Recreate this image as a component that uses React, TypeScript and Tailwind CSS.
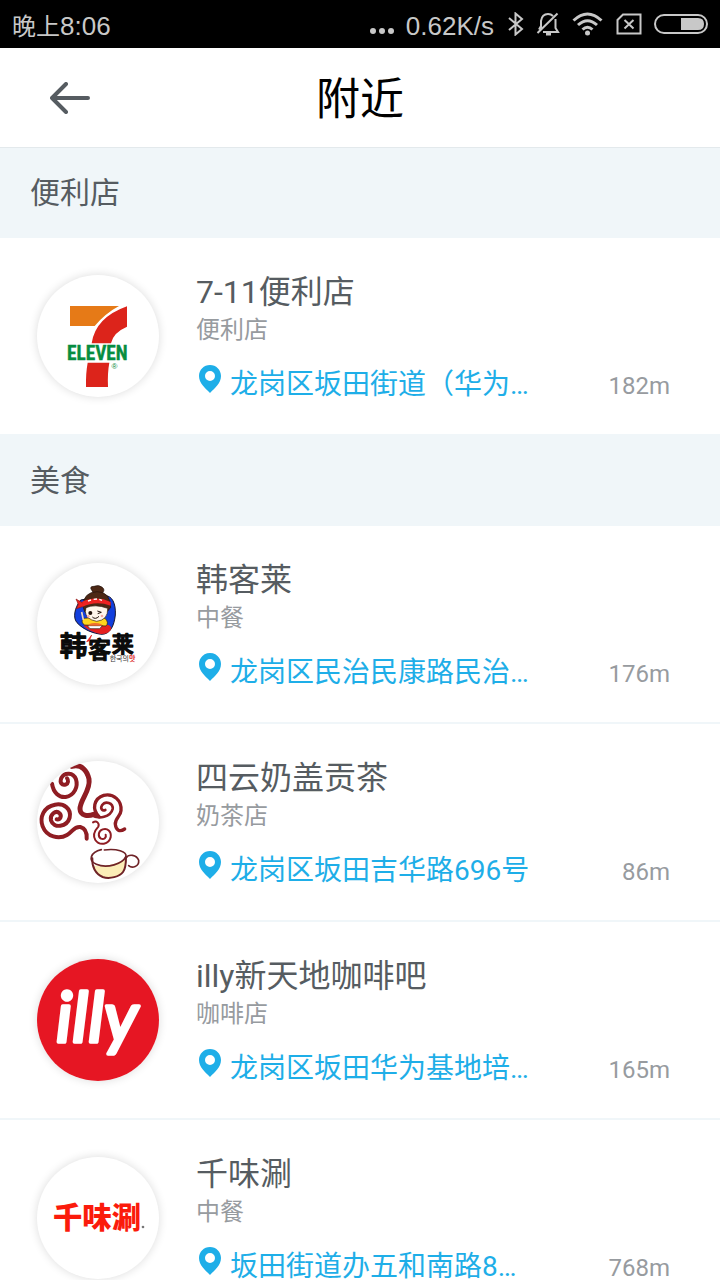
import type { ReactNode } from 'react';

type Shop = {
  name: string;
  type: string;
  address: string;
  distance: string;
  logo: ReactNode;
};

type Section = {
  title: string;
  shops: Shop[];
};

const SevenElevenLogo = () => (
  <svg viewBox="21 30 366 366" className="size-full" role="img" aria-label="7-Eleven">
    <path d="M120 123H267Q226 145 194 183H120Z" fill="#e67a17" />
    <path d="M291 124V185Q249 203 243 235H185Q196 158 291 124Z" fill="#dc241b" />
    <path d="M173 293H238Q232 325 234 366H168Q167 325 173 293Z" fill="#dc241b" />
    <text x="202" y="285" textAnchor="middle" fontSize="58" fontWeight="700" fill="#078d40" stroke="#078d40" strokeWidth="1" className="font-['Roboto_Condensed','Roboto',sans-serif]">ELEVEN</text>
    <text x="253" y="313" textAnchor="middle" fontSize="24" fill="#078d40" className="font-['Liberation_Sans',sans-serif]">®</text>
  </svg>
);

const HankelaiLogo = () => (
  <svg viewBox="21 24 366 366" className="size-full" role="img" aria-label="韩客莱">
    <path d="M152 135C132 160 129 190 141 203C160 224 190 236 217 238C240 236 252 215 256 180C258 145 246 122 226 122Z" fill="#123fdd" stroke="#15142c" strokeWidth="3" />
    <path d="M160 212Q188 203 235 210Q246 213 242 225Q232 239 211 237Q181 231 160 212Z" fill="#e5201f" />
    <path d="M161 190Q150 202 164 210L228 213Q238 203 225 190L205 187Z" fill="#ffd51c" stroke="#2b1a10" strokeWidth="2" />
    <path d="M186 107Q176 94 192 94Q207 88 217 97Q227 105 216 115H191Z" fill="#4c2815" stroke="#21110a" strokeWidth="2" />
    <path d="M159 155Q159 111 202 110Q241 111 242 157L232 170L165 172Z" fill="#4c2815" stroke="#21110a" strokeWidth="2" />
    <path d="M168 158Q195 146 233 160Q235 195 200 199Q167 193 166 170Z" fill="#fff6ec" stroke="#2b1a10" strokeWidth="2" />
    <path d="M153 142Q197 120 242 141V152Q197 136 157 156Z" fill="#ed2222" />
    <path d="M158 144L138 132L145 148L139 161L157 155" fill="#ed2222" stroke="#8c1717" strokeWidth="2" />
    <path d="M174 138L183 135M191 133L201 132M208 133L216 136" stroke="#fff" strokeWidth="4" />
    <circle cx="181" cy="174" r="6" fill="#21110a" />
    <path d="M202 168L214 172M203 176L214 172M187 186Q196 195 207 184" fill="none" stroke="#21110a" strokeWidth="3" />
    <circle cx="175" cy="184" r="4" fill="#f8a9a0" />
    <circle cx="216" cy="183" r="4" fill="#f8a9a0" />
    <path d="M172 212H217L209 221H180Z" fill="#fff" stroke="#2b1a10" strokeWidth="2" />
    <path d="M176 208Q194 200 215 208V212H176Z" fill="#ef6e2f" />
    <path d="M155 171L160 195" stroke="#e9d5c2" strokeWidth="5" />
    <g fontWeight="500" fill="#0b0b0b" stroke="#0b0b0b" strokeWidth="4" strokeLinejoin="round" className="font-['Noto_Sans_CJK_SC',sans-serif]">
      <text x="89" y="302" fontSize="82">韩</text>
      <text x="175" y="308" fontSize="68">客</text>
      <text x="245" y="290" fontSize="66">莱</text>
    </g>
    <path d="M170 260L185 240L178 257Z" fill="#e5201f" stroke="#e5201f" strokeWidth="2" />
    <text x="239" y="318" fontSize="21" fill="#333" className="font-['Noto_Sans_CJK_KR',sans-serif]">
      한국의<tspan fontWeight="700" fill="#dc2a2a">맛</tspan>
    </text>
  </svg>
);

const TeaLogo = () => (
  <svg viewBox="21 33 366 366" className="size-full" role="img" aria-label="四云奶盖贡茶">
    <g fill="none" stroke="#8f1d23" strokeLinecap="round" strokeLinejoin="round">
      <path d="M66 101C70 128 87 143 107 141C133 137 145 110 138 88C130 67 104 66 94 84C88 98 96 108 108 103C115 100 116 91 111 85" strokeWidth="12" />
      <path d="M126 49C155 42 171 61 177 87C183 121 149 150 150 177C151 198 174 200 191 193" strokeWidth="15" />
      <path d="M182 194C207 210 242 201 248 177C250 158 226 151 216 166C210 176 217 184 226 180" strokeWidth="8" />
      <path d="M207 200C185 178 191 146 221 136C251 129 276 152 273 182C272 199 254 205 256 223C258 241 269 247 284 237" strokeWidth="10" />
      <path d="M80 208C91 210 96 198 89 190C77 178 59 195 63 211C71 237 111 231 119 203C125 176 101 159 75 164C41 170 28 202 38 229C50 261 87 269 111 255C129 245 132 228 151 231C167 235 171 249 170 266" strokeWidth="12" />
      <path d="M189 217C200 210 209 220 205 230C194 242 187 255 196 270C208 288 237 284 242 262C245 244 232 233 218 238C204 243 203 260 213 266C222 270 230 262 227 254" strokeWidth="6" />
    </g>
    <path d="M188 346Q229 356 289 326Q290 372 249 382H217Q192 370 188 346Z" fill="#fbedb7" />
    <g fill="none" stroke="#6f2327" strokeLinecap="round">
      <path d="M214 299C181 307 173 332 199 343C232 357 278 341 288 319C290 305 261 295 223 300" strokeWidth="5" />
      <path d="M187 325C185 349 196 371 218 381C239 388 269 380 279 366C287 356 288 342 288 321" strokeWidth="6" />
      <path d="M288 324C296 311 320 314 326 331C328 350 306 356 296 347" strokeWidth="5" />
    </g>
  </svg>
);

const IllyLogo = () => (
  <svg viewBox="21 27 366 366" className="size-full" role="img" aria-label="illy">
    <rect x="21" y="27" width="366" height="366" fill="#e61623" />
    <text x="78" y="276" fontSize="212" fontStyle="italic" fontWeight="400" fill="#fff" stroke="#fff" strokeWidth="11" strokeLinejoin="round" className="font-['Lato',sans-serif]">illy</text>
  </svg>
);

const QianweishuanLogo = () => (
  <svg viewBox="21 21 366 366" className="size-full" role="img" aria-label="千味涮">
    <text x="69" y="235" fontSize="88" fontWeight="900" fill="#fb1b0c" className="font-['Noto_Sans_CJK_SC',sans-serif]">千味涮</text>
    <circle cx="339" cy="231" r="4" fill="#777" />
  </svg>
);

const sections: Section[] = [
  {
    title: '便利店',
    shops: [
      { name: '7-11便利店', type: '便利店', address: '龙岗区坂田街道（华为…', distance: '182m', logo: <SevenElevenLogo /> },
    ],
  },
  {
    title: '美食',
    shops: [
      { name: '韩客莱', type: '中餐', address: '龙岗区民治民康路民治…', distance: '176m', logo: <HankelaiLogo /> },
      { name: '四云奶盖贡茶', type: '奶茶店', address: '龙岗区坂田吉华路696号', distance: '86m', logo: <TeaLogo /> },
      { name: 'illy新天地咖啡吧', type: '咖啡店', address: '龙岗区坂田华为基地培…', distance: '165m', logo: <IllyLogo /> },
      { name: '千味涮', type: '中餐', address: '坂田街道办五和南路8…', distance: '768m', logo: <QianweishuanLogo /> },
    ],
  },
];

const StatusBar = () => (
  <div className="flex h-12 shrink-0 items-center justify-between bg-black px-3 font-['Liberation_Sans','Noto_Sans_CJK_SC',sans-serif] text-[26px] leading-10 text-[#c8c8c8]">
    <div className="flex items-baseline pt-1">
      <span className="text-2xl leading-10">晚上</span>
      <span>8:06</span>
    </div>
    <div className="flex items-center gap-3">
      <svg viewBox="0 0 24 24" className="size-6" fill="currentColor" aria-hidden="true">
        <circle cx="3" cy="19" r="3" />
        <circle cx="12" cy="19" r="3" />
        <circle cx="21" cy="19" r="3" />
      </svg>
      <span className="pt-1 pr-0.5">0.62K/s</span>
      <svg viewBox="0 0 16 24" className="h-6 w-4" fill="none" stroke="currentColor" strokeWidth="2" aria-hidden="true">
        <path d="M1 6L14 17L7.500 22.500V1.500L14 7L1 18" />
      </svg>
      <svg viewBox="0 0 24 24" className="size-6" fill="none" stroke="currentColor" strokeWidth="2" aria-hidden="true">
        <path d="M1.500 21L21.500 1.500M5 16V9Q6 2 12 2Q15 2 17 4M19.500 7V16L22 20H7M5 14L3 17.500" />
        <path d="M10 22H15" strokeWidth="3" />
      </svg>
      <svg viewBox="0 0 32 24" className="h-6 w-8" fill="none" stroke="currentColor" strokeWidth="3" aria-hidden="true">
        <path d="M1.500 8.500Q15.500 -4.500 29.500 8.500M6 13Q15.500 4.500 25 13M10.500 17.500Q15.500 13 20.500 17.500" />
        <circle cx="15.500" cy="21" r="2.500" fill="currentColor" stroke="none" />
      </svg>
      <svg viewBox="0 0 26 22" className="h-[22px] w-[26px]" fill="none" stroke="currentColor" strokeWidth="2" aria-hidden="true">
        <path d="M7 1.500H24.500V20.500H1.500V7ZM8.500 7L17.500 15.500M17.500 7L8.500 15.500" />
      </svg>
      <svg viewBox="0 0 54 20" className="h-5 w-[54px]" aria-hidden="true">
        <rect x="1" y="1" width="52" height="18" rx="9" fill="none" stroke="currentColor" strokeWidth="2" />
        <path d="M27 4H44Q50 4 50 10Q50 16 44 16H27Z" fill="currentColor" />
      </svg>
    </div>
  </div>
);

const Header = () => (
  <header className="grid h-[100px] shrink-0 grid-cols-[1fr_auto_1fr] items-center border-b border-[#e3e9ec] bg-white">
    <button type="button" aria-label="返回" className="ml-[50px] w-10 text-[#565c61]">
      <svg viewBox="0 0 40 32" className="h-8 w-10" fill="none" stroke="currentColor" strokeWidth="4" strokeLinecap="round" strokeLinejoin="round">
        <path d="M38 16H2M16 2L2 16L16 30" />
      </svg>
    </button>
    <h1 className="pt-1 text-[44px] leading-none text-black">附近</h1>
  </header>
);

const PinIcon = () => (
  <svg viewBox="0 0 22 28" className="h-7 w-[22px] shrink-0" fill="#1eaee8" aria-hidden="true">
    <path fillRule="evenodd" d="M11 0C4.900 0 0 4.800 0 11C0 18 6 23 11 28C16 23 22 18 22 11C22 4.800 17.100 0 11 0ZM11 6A5 5 0 1 1 11 16A5 5 0 1 1 11 6Z" />
  </svg>
);

const ShopRow = ({ shop }: { shop: Shop }) => (
  <li className="flex h-[198px] items-center border-b-2 border-[#f0f6f9] bg-white pr-[50px] pl-[37px]">
    <div className="size-[122px] shrink-0 overflow-hidden rounded-full bg-white shadow-[0_0_10px_rgba(0,0,0,0.14)]">{shop.logo}</div>
    <div className="ml-[37px] min-w-0 flex-1 pt-[5px]">
      <h3 className="truncate text-[32px] leading-10 text-[#565c61]">{shop.name}</h3>
      <p className="text-2xl leading-9 text-[#979b9f]">{shop.type}</p>
      <div className="mt-[17px] flex items-end justify-between">
        <div className="flex min-w-0 gap-[9px] pl-[3px] text-[#1eaee8]">
          <PinIcon />
          <span className="truncate text-[28px] leading-10">{shop.address}</span>
        </div>
        <span className="text-2xl leading-[38px] text-[#979b9f]">{shop.distance}</span>
      </div>
    </div>
  </li>
);

const App = () => {
  return (
    <div className="flex h-screen flex-col bg-white font-['Roboto','Noto_Sans_CJK_SC',sans-serif]">
      <StatusBar />
      <Header />
      <main className="min-h-0 flex-1 overflow-y-auto [scrollbar-width:none]">
        {sections.map((section) => (
          <section key={section.title}>
            <h2 className="flex h-[90px] items-center bg-[#f0f6f9] px-[30px] text-[30px] leading-none text-[#565c61]">{section.title}</h2>
            <ul>
              {section.shops.map((shop) => (
                <ShopRow key={shop.name} shop={shop} />
              ))}
            </ul>
          </section>
        ))}
      </main>
    </div>
  );
};

export default App;
